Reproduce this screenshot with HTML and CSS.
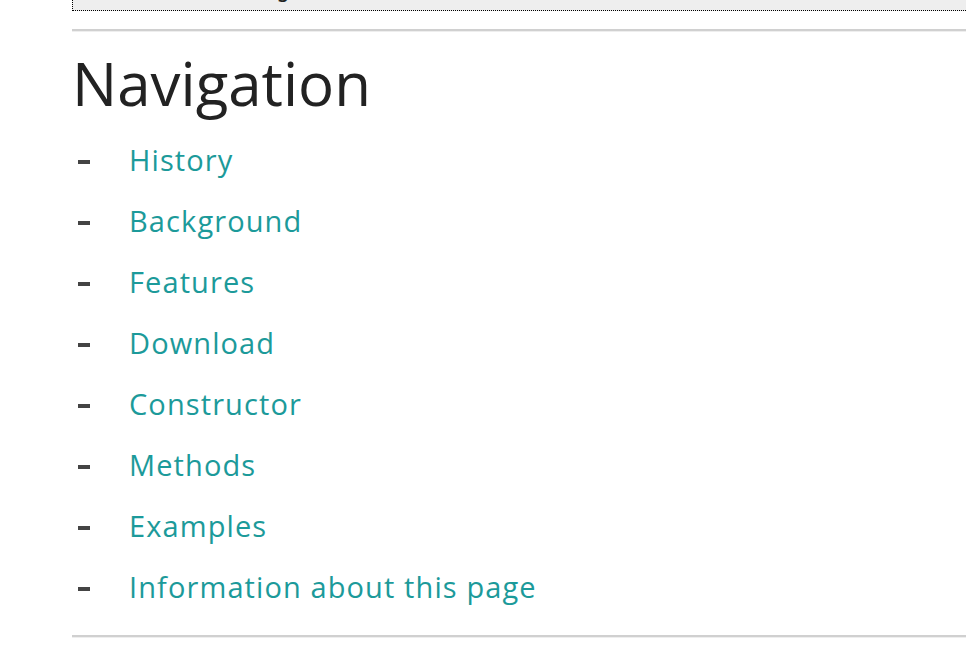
FILE: index.html
```html
<!DOCTYPE html>
<html>
<head>
<meta charset="utf-8">
<link rel="stylesheet" href="styles.css">
</head>
<body>
<div class="page">
  <div class="codebox"><div class="codeline">Reading</div></div>
  <hr class="rule">
  <h2 class="title">Navigation</h2>
  <ul class="nav">
    <li><a href="#history">History</a></li>
    <li><a href="#background">Background</a></li>
    <li><a href="#features">Features</a></li>
    <li><a href="#download">Download</a></li>
    <li><a href="#constructor">Constructor</a></li>
    <li><a href="#methods">Methods</a></li>
    <li><a href="#examples">Examples</a></li>
    <li><a href="#info">Information about this page</a></li>
  </ul>
  <hr class="rule">
</div>
</body>
</html>
```
FILE: styles.css
```css
html, body {
  margin: 0;
  padding: 0;
  background: #fff;
}
body {
  font-family: "Open Sans", "Noto Sans", sans-serif;
  color: #222;
  overflow: hidden;
}
.page {
  padding-left: 72px;
}
.codebox {
  height: 10px;
  background: #eee;
  border-left: 1px dotted #000;
  border-bottom: 1px dotted #000;
  overflow: hidden;
}
.codeline {
  margin-top: -23px;
  font-family: "DejaVu Sans Mono", monospace;
  font-size: 24px;
  line-height: 24px;
  color: #222;
  padding-left: 116px;
  white-space: nowrap;
}
.rule {
  margin: 18px 0 0 0;
  border: 0;
  border-top: 2px solid #d0d0d0;
  border-bottom: 1px solid #eee;
  height: 0;
}
.title {
  margin: 15px 0 0 0;
  font-size: 60px;
  font-weight: 400;
  line-height: 72px;
  color: #222;
}
.nav {
  list-style: none;
  margin: 10px 0 0 0;
  padding: 0;
}
.nav li {
  display: flex;
  align-items: center;
  height: 61px;
  font-size: 29px;
  letter-spacing: 1.1px;
}
.nav li::before {
  content: "";
  width: 12px;
  height: 4px;
  background: #444;
  margin-left: 6px;
  margin-right: 39px;
  position: relative;
  top: 2px;
}
.nav a {
  color: #1c9a9a;
  text-decoration: none;
}
```
